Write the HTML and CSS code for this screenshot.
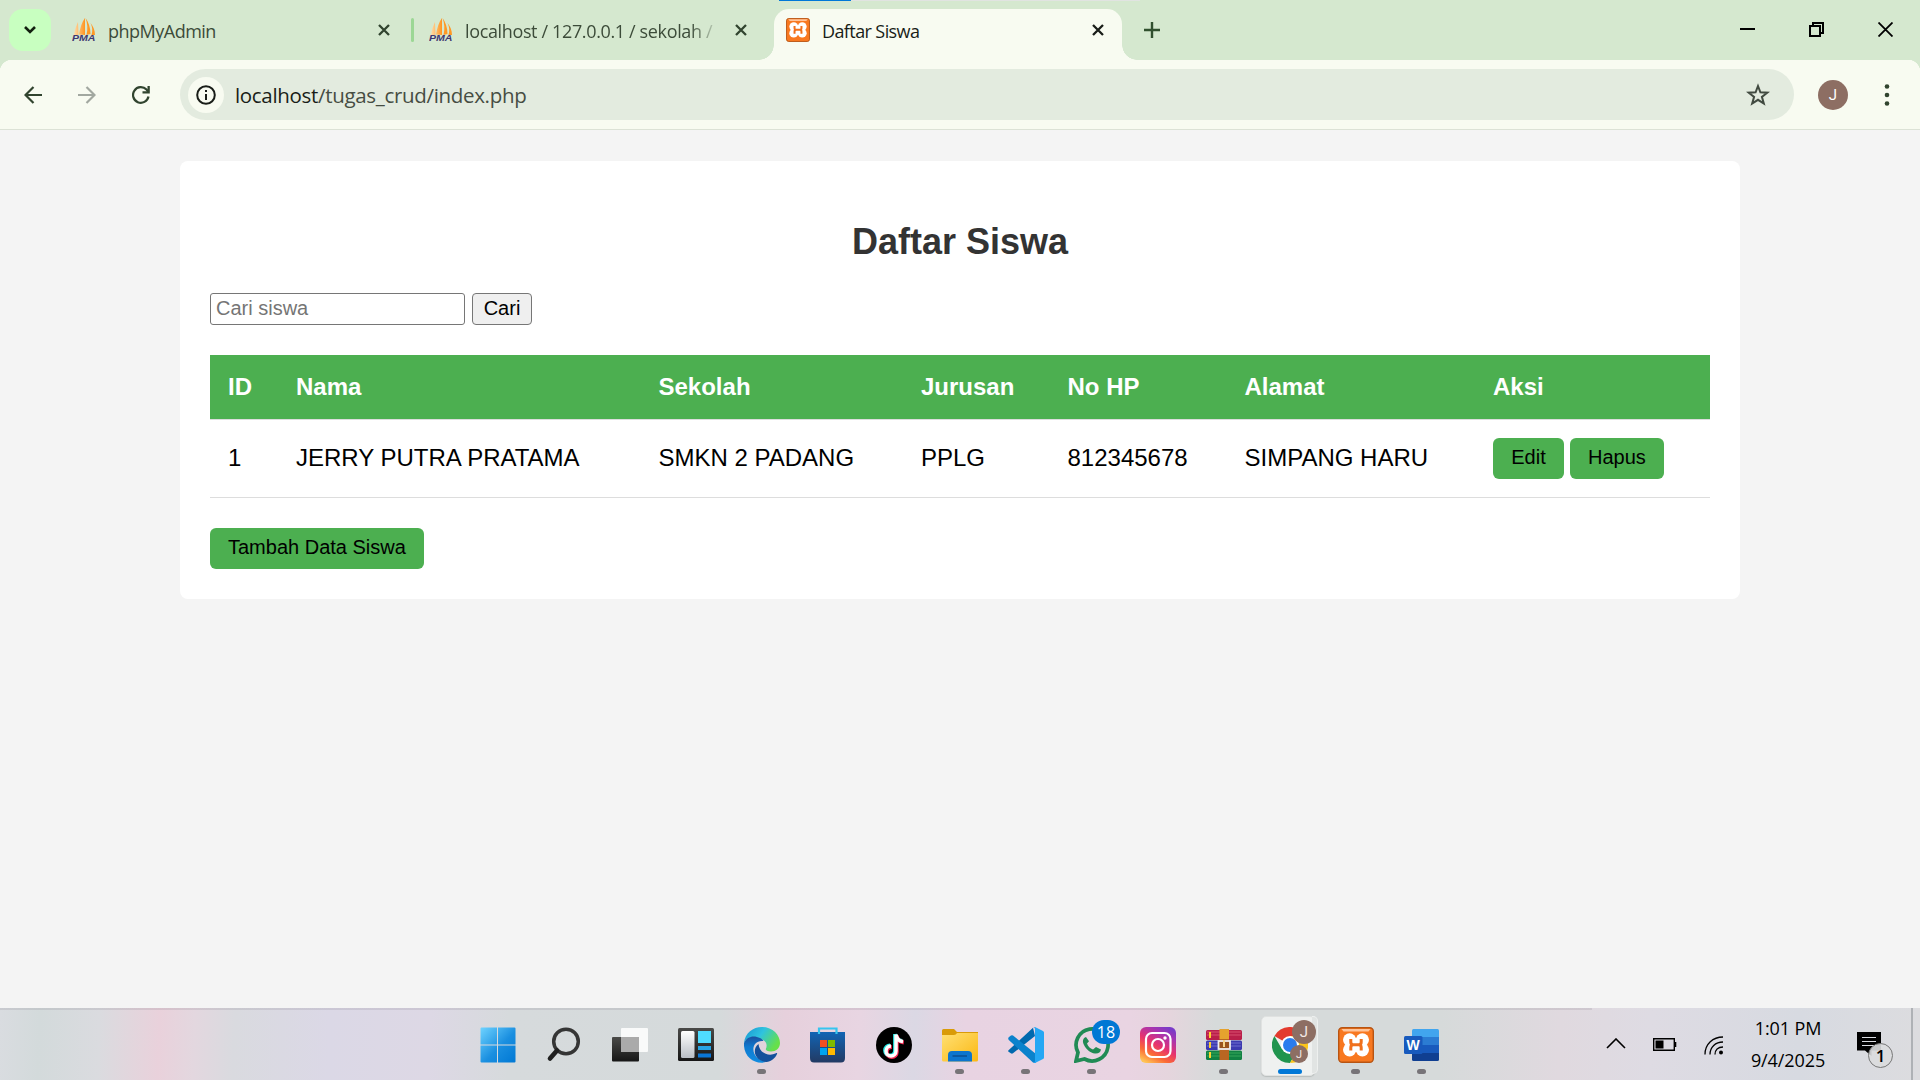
FILE: index.html
```html
<!DOCTYPE html>
<html lang="id">
<head>
<meta charset="utf-8">
<title>Daftar Siswa</title>
<link rel="stylesheet" href="styles.css">
</head>
<body>
<svg class="defs" width="0" height="0">
  <defs>
    <linearGradient id="sail" x1="0" y1="0" x2="1" y2="0"><stop offset="0" stop-color="#ffdba8"/><stop offset="1" stop-color="#ff9420"/></linearGradient>
    <linearGradient id="win" x1="0" y1="0" x2="1" y2="1"><stop offset="0" stop-color="#6fd3ff"/><stop offset=".55" stop-color="#1a8fe0"/><stop offset="1" stop-color="#0078d4"/></linearGradient>
    <linearGradient id="dark" x1="0" y1="0" x2="0" y2="1"><stop offset="0" stop-color="#4a4a48"/><stop offset="1" stop-color="#161616"/></linearGradient>
    <linearGradient id="panel" x1="0" y1="0" x2="0" y2="1"><stop offset="0" stop-color="#fff"/><stop offset="1" stop-color="#b9bec5"/></linearGradient>
    <linearGradient id="edgeTop" x1="0" y1="0" x2="1" y2=".5"><stop offset="0" stop-color="#1793d3"/><stop offset=".5" stop-color="#2fc3df"/><stop offset="1" stop-color="#66e04a"/></linearGradient>
    <linearGradient id="edgeLeft" x1="0" y1="0" x2="0" y2="1"><stop offset="0" stop-color="#1b4f9e"/><stop offset=".4" stop-color="#0f7ad0"/><stop offset="1" stop-color="#118ce0"/></linearGradient>
    <linearGradient id="store" x1="0" y1="0" x2="0" y2="1"><stop offset="0" stop-color="#1164b4"/><stop offset="1" stop-color="#233a63"/></linearGradient>
    <linearGradient id="folder" x1="0" y1="0" x2="1" y2="1"><stop offset="0" stop-color="#ffe074"/><stop offset="1" stop-color="#fbb813"/></linearGradient>
    <linearGradient id="ig" x1=".2" y1="1" x2=".75" y2="0"><stop offset="0" stop-color="#ffc455"/><stop offset=".25" stop-color="#fb6a35"/><stop offset=".5" stop-color="#e8336d"/><stop offset=".8" stop-color="#a835b0"/><stop offset="1" stop-color="#7a3bc8"/></linearGradient>
    <symbol id="pma" viewBox="0 0 24 24">
      <path d="M6 4C4 8 2.500 13 2 17h4.500zM13 0c-3 4-5 10-6 16.500l6 .5z" fill="url(#sail)"/>
      <path d="M13.500 0c2 5 2.500 11 1 17l4-1C18.500 10 16.500 4 13.500 0zM18.500 5c2 4 2.300 8 1 12H23c0-5-2-9-4.500-12z" fill="#ff9824"/>
      <text x="0" y="23.200" textLength="23.500" lengthAdjust="spacingAndGlyphs" class="pma-text">PMA</text>
    </symbol>
    <symbol id="xampp" viewBox="0 0 36 36">
      <rect x=".7" y=".7" width="34.600" height="34.600" rx="3.500" fill="#f87820" stroke="#b85412" stroke-width="1.400"/>
      <path d="M3.500 2h29l-2 2.500h-25z" fill="#ffc49a"/>
      <g fill="#fff"><circle cx="11.600" cy="12.800" r="6.600"/><circle cx="24.400" cy="12.800" r="6.600"/><circle cx="11.600" cy="22.800" r="6.600"/><circle cx="24.400" cy="22.800" r="6.600"/><path d="M11 11h14v14H11z"/></g>
      <path d="M12.800 12v3q0 2.800 2.500 2.800h5.400q2.500 0 2.500-2.800v-3M12.800 23.600v-3q0-2.800 2.500-2.800M23.200 23.600v-3q0-2.800-2.500-2.800" fill="none" stroke="#f0701c" stroke-width="3"/>
    </symbol>
    <symbol id="close" viewBox="0 0 14 14"><path d="M2 2l10 10M12 2L2 12" fill="none" stroke="currentColor" stroke-width="2.300"/></symbol>
  </defs>
</svg>

<header class="tabstrip">
  <button class="tab-search" aria-label="Cari tab"><svg width="14" height="10" viewBox="0 0 14 10"><path d="M2 2l5 5 5-5" fill="none" stroke="#12200f" stroke-width="2.600"/></svg></button>
  <div class="tab tab-first">
    <svg class="favicon"><use href="#pma"/></svg><span class="tab-title t1">phpMyAdmin</span><svg class="tab-close"><use href="#close"/></svg>
  </div>
  <i class="tab-divider"></i>
  <div class="tab tab-second">
    <svg class="favicon"><use href="#pma"/></svg><span class="tab-title t2">localhost / 127.0.0.1 / sekolah /</span><svg class="tab-close"><use href="#close"/></svg>
  </div>
  <div class="tab tab-active">
    <svg class="favicon"><use href="#xampp"/></svg><span class="tab-title t3">Daftar Siswa</span><svg class="tab-close"><use href="#close"/></svg>
  </div>
  <button class="new-tab" aria-label="Tab baru"><svg width="16" height="16" viewBox="0 0 16 16"><path d="M8 0v16M0 8h16" stroke="#31502f" stroke-width="2.400"/></svg></button>
  <div class="window-controls">
    <svg width="15" height="15"><path d="M0 7h15" stroke="#000" stroke-width="2"/></svg>
    <svg width="15" height="15"><path d="M1 4h10v10H1zM4 4V1h10v10h-3" fill="none" stroke="#000" stroke-width="2"/></svg>
    <svg width="15" height="15"><path d="M.5.5l14 14M14.500.5l-14 14" stroke="#000" stroke-width="1.800"/></svg>
  </div>
  <i class="load-bar"></i>
</header>

<nav class="toolbar">
  <svg class="nav-icon back" viewBox="0 0 18 18"><path d="M18 9H2M9.500 1L1.500 9l8 8" fill="none" stroke="#31442f" stroke-width="2.200"/></svg>
  <svg class="nav-icon forward" viewBox="0 0 18 18"><path d="M0 9h16M8.500 1l8 8-8 8" fill="none" stroke="#a2a8a0" stroke-width="2.200"/></svg>
  <svg class="nav-icon reload" viewBox="0 0 18 18"><path d="M16.500 10.500A7.800 7.800 0 1 1 14.500 3.600L16.500 6" fill="none" stroke="#31442f" stroke-width="2.200"/><path d="M17.800 0v7.500h-7.300V5.300h5V0z" fill="#31442f"/></svg>
  <div class="omnibox">
    <span class="site-info"><svg width="20" height="20" viewBox="0 0 20 20"><circle cx="10" cy="10" r="8.800" fill="none" stroke="#191d18" stroke-width="2"/><path d="M10 9v6M10 5v2" stroke="#191d18" stroke-width="2"/></svg></span>
    <span class="url"><b>localhost</b>/tugas_crud/index.php</span>
    <svg class="star" width="24" height="24" viewBox="0 0 24 24"><path d="M12 3l2.400 6.300 6.900.4-5.400 4.200 1.900 6.600-5.800-3.700-5.800 3.700 1.900-6.600-5.400-4.200 6.900-.4z" fill="none" stroke="#414a40" stroke-width="2"/></svg>
  </div>
  <span class="avatar">J</span>
  <svg class="menu" width="6" height="22"><circle cx="3" cy="2.500" r="2.300"/><circle cx="3" cy="11" r="2.300"/><circle cx="3" cy="19.500" r="2.300"/></svg>
</nav>

<main class="page">
  <section class="container">
    <h2>Daftar Siswa</h2>
    <form class="search">
      <input type="text" placeholder="Cari siswa">
      <button type="button">Cari</button>
    </form>
    <table>
      <colgroup><col class="c-id"><col class="c-nama"><col class="c-sekolah"><col class="c-jurusan"><col class="c-hp"><col class="c-alamat"><col></colgroup>
      <tr><th>ID</th><th>Nama</th><th>Sekolah</th><th>Jurusan</th><th>No HP</th><th>Alamat</th><th>Aksi</th></tr>
      <tr><td>1</td><td>JERRY PUTRA PRATAMA</td><td>SMKN 2 PADANG</td><td>PPLG</td><td>812345678</td><td>SIMPANG HARU</td><td class="aksi"><div class="actions"><button class="btn edit">Edit</button><button class="btn">Hapus</button></div></td></tr>
    </table>
    <button class="btn add">Tambah Data Siswa</button>
  </section>
</main>

<footer class="taskbar">
  <div class="apps">
    <span class="app"><svg viewBox="0 0 36 36"><path d="M1.500.5H17v17H.5v-16q0-1 1-1zM18 .5h16.500q1 0 1 1v16H18zM.5 18.500H17v17H1.500q-1 0-1-1zM18 18.500h17.500v16q0 1-1 1H18z" fill="url(#win)"/></svg></span>
    <span class="app"><svg viewBox="0 0 36 36"><circle cx="20" cy="14.500" r="12.300" fill="none" stroke="#353535" stroke-width="3.500"/><path d="M11 23.500l-7 8" stroke="#202020" stroke-width="4.600" stroke-linecap="round"/></svg></span>
    <span class="app"><svg viewBox="0 0 36 36"><rect y="10" width="27" height="24.500" rx="1" fill="url(#dark)"/><rect x="9" y="1" width="27" height="24" rx="1" fill="#fff" opacity=".86"/><path d="M9 10h18v15H9z" fill="#aaa"/></svg></span>
    <span class="app"><svg viewBox="0 0 36 36"><rect y="1" width="36" height="33" rx="1.500" fill="url(#dark)"/><rect x="3" y="4" width="13.500" height="27" rx="1.500" fill="url(#panel)"/><path d="M20 4h13v12H20z" fill="#4fdcff"/><path d="M20 19h13v4H20z" fill="#27a4e4"/><path d="M20 26.500h13v4H20z" fill="#0a76d6"/></svg></span>
    <span class="app running"><svg viewBox="0 0 36 36"><path d="M0 16C1 6 9 0 18 0c11 0 18 8 18 16 0 5-4 8.500-9 8.500-4 0-6-1.500-5-3 1-2 1.500-7-4-9C10 9 3 10 0 16z" fill="url(#edgeTop)"/><path d="M0 16C3 9 10 8 16 11c2 1 3 2 3.500 3-9-1-12 7-9 13 2.500 5 8 8 13 7.500C13 39-1 31 0 16z" fill="url(#edgeLeft)"/><path d="M14.500 17c-7 5-4 17 8 18 4 0 9-4 10.500-8 .4-1-.2-1.300-1-.7-8 4-17-1-17.500-9.300z" fill="#13509b"/></svg></span>
    <span class="app"><svg viewBox="0 0 36 36"><path d="M9 8V1.500h17.500V8" fill="none" stroke="#36c5ef" stroke-width="2.200"/><path d="M0 5h35v26q0 4.500-4 4.500H4Q0 35.500 0 31z" fill="url(#store)"/><path d="M9 5v2M26.500 5v2" stroke="#36c5ef" stroke-width="2.200"/><path d="M10 13h7v7h-7z" fill="#f25022"/><path d="M18 13h7v7h-7z" fill="#7fba00"/><path d="M10 21h7v7h-7z" fill="#00a4ef"/><path d="M18 21h7v7h-7z" fill="#ffb900"/></svg></span>
    <span class="app"><svg viewBox="0 0 36 36"><circle cx="18" cy="18" r="18"/><path d="M19 7v16.500a5 5 0 1 1-5-5M19 7c.5 4 3 6.500 7 7" fill="none" stroke="#25e8e4" stroke-width="3.800"/><path d="M20.800 8.500V25a5 5 0 1 1-5-5M20.800 8.500c.5 4 3 6.500 7 7" fill="none" stroke="#fb2d57" stroke-width="3.800"/><path d="M20 7.500V24a5 5 0 1 1-5-5M20 7.500c.5 4 3 6.500 7 7" fill="none" stroke="#fff" stroke-width="3.500"/></svg></span>
    <span class="app running"><svg viewBox="0 0 36 36"><path d="M0 3.500Q0 2 1.500 2H12l3 3h21v8H0z" fill="#d99b08"/><path d="M0 8h12q2 0 3-2h21v27q0 1.500-1.500 1.500h-33Q0 34.500 0 33z" fill="url(#folder)"/><path d="M6 34.500V28q0-4 4-4h16q4 0 4 4v6.500z" fill="#0d75cd"/><path d="M10.500 29h14.500" stroke="#0b4f91" stroke-width="1.500"/></svg></span>
    <span class="app running"><svg viewBox="0 0 36 36"><path d="M.8 23L25 .8 27 9 5 26.300q-1 .8-2.200 0L.6 24.800q-1-.8.2-1.800z" fill="#0069ae"/><path d="M1 10l2-1.500q1-.7 2 0L28 27v8.500q-1.500.8-3 0L.8 13q-1.300-1.500.2-3z" fill="#0b82cc"/><path d="M25 .5q1-1 2.500-.3L35 4q1 .5 1 1.500v25q0 1-1 1.500l-7.500 3.800q-1.500.5-2.500-.5 2 1 2-1.500v-31.500q0-2.500-2-1.800z" fill="#25a7f4"/></svg></span>
    <span class="app running"><svg viewBox="0 0 36 36"><path d="M2 34l2-8.500A16 16 0 1 1 10.500 32z" fill="none" stroke="#218b55" stroke-width="3.700"/><path d="M12 10c-3 1-4 4-2 8 2.500 4.500 6 8 11 8.500 3.500.3 5.500-1 6-4l-5-2.500-3 2.500c-3-1-5-3.300-6-6l2-2.300z" fill="#218b55"/></svg><b class="count">18</b></span>
    <span class="app"><svg viewBox="0 0 36 36"><rect width="36" height="36" rx="6" fill="url(#ig)"/><rect x="6" y="6" width="24.500" height="24" rx="6" fill="none" stroke="#fff" stroke-width="2.200"/><circle cx="18" cy="18" r="6" fill="none" stroke="#fff" stroke-width="2.200"/><circle cx="25" cy="11" r="1.700" fill="#fff"/></svg></span>
    <span class="app running"><svg viewBox="0 0 36 36"><rect y="3" width="36" height="10" rx="1.500" fill="#b91f4a"/><path d="M1 5h34M1 8h34" stroke="#d8506f"/><rect y="13.500" width="36" height="9.500" rx="1.500" fill="#3c3ab0"/><path d="M1 16h34M1 19h34" stroke="#6f6dce"/><rect y="23.500" width="36" height="9.500" rx="1.500" fill="#118243"/><path d="M1 26h34M1 29h34" stroke="#38a75a"/><path d="M3 5h2v6H3zM3 15h2v6H3zM3 25h2v6H3z" fill="#ffd22d"/><path d="M13.500 2h9.500v10h-9.500z" fill="#e5a22e"/><path d="M13.500 12h9.500v21h-9.500z" fill="#b96622"/><rect x="12.500" y="14" width="11.500" height="8" fill="#9a541b" stroke="#eee" stroke-width="1.800"/><path d="M18 13v7" stroke="#f5d48b" stroke-width="2"/></svg></span>
    <span class="app running current"><i class="stack"></i><svg viewBox="0 0 36 36"><path d="M18 18L2.400 9A18 18 0 0 1 33.600 9H18z" fill="#e33b2e"/><path d="M18 18l7.800 4.500L18 36A18 18 0 0 1 2.400 9L10.200 22.500z" fill="#20944e"/><path d="M18 9h15.600A18 18 0 0 1 18 36l7.800-13.500z" fill="#fcc519"/><circle cx="18" cy="18" r="9" fill="#fff"/><circle cx="18" cy="18" r="7" fill="#2b7cee"/></svg><b class="profile big">J</b><b class="profile small">J</b></span>
    <span class="app running"><svg><use href="#xampp"/></svg></span>
    <span class="app running"><svg viewBox="0 0 36 36"><path d="M8 3.500Q8 2 9.500 2h24Q35 2 35 3.500V10H8z" fill="#41a5ee"/><path d="M8 10h27v8H8z" fill="#2b7cd3"/><path d="M8 18h27v8H8z" fill="#185abd"/><path d="M8 26h27v6.500q0 1.500-1.500 1.500h-24Q8 34 8 32.500z" fill="#103f91"/><rect y="9" width="18.500" height="18" rx="1.500" fill="#185abd"/><text x="9.200" y="22.800" class="word-text">W</text></svg></span>
  </div>
  <div class="tray">
    <svg width="20" height="11"><path d="M1 10l9-9 9 9" fill="none" stroke="#000" stroke-width="1.600"/></svg>
    <svg width="24" height="13"><path d="M.7.7h20.600v11.600H.7z" fill="none" stroke="#000" stroke-width="1.400"/><path d="M2.500 2.500h8v8h-8zM22 4h1.300v5H22z"/></svg>
    <svg width="20" height="19"><g fill="none" stroke="#000" stroke-width="1.300"><path d="M1 18.500C1 8 9 1 19 1"/><path d="M6 18.500C6 11 11.500 6 19 6" /><path d="M11 18.500c0-4.500 3-7.500 8-7.500"/></g><circle cx="17" cy="16.500" r="2"/></svg>
    <div class="clock"><span>1:01 PM</span><span>9/4/2025</span></div>
    <span class="notice"><svg width="24" height="25"><path d="M0 0h24v18.500h-9.500V24L8 18.500H0z"/><path d="M5 5.500h14M5 9.500h14M5 13.500h14" stroke="#d9dbe1" stroke-width="1.200"/></svg><b>1</b></span>
    <i class="desktop-edge"></i>
  </div>
</footer>
</body>
</html>
```
FILE: styles.css
```css
* { box-sizing: border-box; }
body {
  margin: 0;
  width: 1920px;
  height: 1080px;
  overflow: hidden;
  display: flex;
  flex-direction: column;
  background: #f4f4f4;
  font-family: "Liberation Sans", Arial, sans-serif;
}
button { font-family: inherit; }
svg { display: block; flex: none; }
.defs { position: absolute; }

/* tab strip */
.tabstrip {
  position: relative;
  display: flex;
  height: 60px;
  flex: none;
  background: #d5e8cf;
  font-family: "Open Sans", "Noto Sans", sans-serif;
}
.tab-search {
  display: grid;
  place-items: center;
  width: 42px;
  height: 42px;
  margin: 9px 0 0 9px;
  padding: 0;
  border: 0;
  border-radius: 14px;
  background: #c8ffc0;
}
.tab {
  display: flex;
  align-items: center;
  height: 51px;
  margin-top: 9px;
  padding: 0 0 9px;
  color: #3c4b39;
}
.tab-first { width: 340px; margin-left: 21px; }
.tab-second { width: 321px; margin-left: 15px; }
.tab-active {
  position: relative;
  width: 348px;
  margin-left: 24px;
  padding-left: 12px;
  border-radius: 15px 15px 0 0;
  background: #f8fbf1;
  color: #191d18;
}
.tab-active::before, .tab-active::after {
  content: "";
  position: absolute;
  bottom: 0;
  width: 15px;
  height: 15px;
}
.tab-active::before { left: -15px; background: radial-gradient(circle at 0 0, transparent 14.5px, #f8fbf1 15px); }
.tab-active::after { right: -15px; background: radial-gradient(circle at 100% 0, transparent 14.5px, #f8fbf1 15px); }
.favicon { width: 24px; height: 24px; }
.pma-text { font: italic bold 9px "Liberation Sans", sans-serif; fill: #403770; }
.tab-title { flex: none; width: 269px; margin: 1px 0 0 12px; font-size: 18px; line-height: 24px; white-space: nowrap; }
.t1 { letter-spacing: -.5px; }
.t2 { letter-spacing: -.36px; -webkit-mask-image: linear-gradient(90deg, #000 225px, transparent 255px); mask-image: linear-gradient(90deg, #000 225px, transparent 255px); }
.t3 { letter-spacing: -.6px; }
.tab-close { width: 14px; height: 14px; color: #31442f; }
.tab-active .tab-close { color: #191d18; }
.tab-divider { width: 3px; height: 24px; margin: 18px 0 0 -1px; border-radius: 2px; background: #9cd795; }
.new-tab { width: 16px; height: 16px; margin: 22px 0 0 22px; padding: 0; border: 0; background: none; }
.window-controls { display: flex; gap: 54px; margin: 22px 27px 0 auto; }
.load-bar { position: absolute; left: 779px; top: 0; width: 361px; height: 1px; background: linear-gradient(90deg, #0078d7 72px, #e1e4e1 72px); }

/* toolbar */
.toolbar {
  display: flex;
  align-items: center;
  height: 70px;
  flex: none;
  padding: 0 30px 0 24px;
  border-bottom: 1px solid #dce2d6;
  background:
    radial-gradient(circle at 12px 12px, #f8fbf1 12px, #d5e8cf 12.5px) 0 0 / 12px 12px no-repeat,
    radial-gradient(circle at 0 12px, #f8fbf1 12px, #d5e8cf 12.5px) 100% 0 / 12px 12px no-repeat,
    #f8fbf1;
  font-family: "Open Sans", "Noto Sans", sans-serif;
}
.nav-icon { width: 18px; height: 18px; margin-right: 36px; }
.nav-icon.reload { margin-right: 30px; }
.omnibox {
  display: flex;
  align-items: center;
  width: 1614px;
  height: 51px;
  padding: 0 24px 0 8px;
  border-radius: 26px;
  background: #e3ebdf;
}
.site-info { display: grid; place-items: center; width: 36px; height: 36px; border-radius: 50%; background: #f8fbf1; }
.url { margin-left: 11px; font-size: 20.5px; letter-spacing: -.32px; color: #464d43; }
.url b { font-weight: 400; color: #191d18; }
.star { margin-left: auto; }
.avatar { display: grid; place-items: center; width: 30px; height: 30px; margin-left: 24px; border-radius: 50%; background: #8d6e63; color: #fff; font: 15px Roboto, sans-serif; }
.menu { margin-left: auto; fill: #31442f; }

/* page */
.page { flex: 1; padding: 31px 180px 0; }
.container { height: 438px; padding: 60px 30px 30px; border-radius: 8px; background: #fff; }
h2 { margin: 0; color: #333; font-size: 36px; line-height: 41px; text-align: center; }
.search { display: flex; gap: 7px; margin-top: 31px; }
.search input { width: 255px; height: 32px; padding: 0 5px 2px; border: 1.5px solid #767676; border-radius: 3px; font: 20px "Liberation Sans", Arial, sans-serif; }
.search input::placeholder { color: #757575; opacity: 1; }
.search button { width: 60px; height: 32px; padding: 0 0 2px; border: 1.5px solid #767676; border-radius: 4px; background: #efefef; color: #000; font-size: 20px; line-height: 28px; }
table { width: 1500px; margin-top: 30px; border-collapse: separate; border-spacing: 0; table-layout: fixed; font-size: 24px; }
.c-id { width: 68px; }
.c-nama { width: 362.5px; }
.c-sekolah { width: 262.5px; }
.c-jurusan { width: 146.5px; }
.c-hp { width: 177px; }
.c-alamat { width: 248.5px; }
th, td { padding: 0 18px; border-bottom: 1px solid #ddd; text-align: left; white-space: nowrap; }
th { height: 65px; background: #4caf50; background-clip: padding-box; color: #fff; }
td { height: 78px; padding-bottom: 2px; color: #000; }
td.aksi { padding-bottom: 0; }
.actions { display: flex; gap: 6px; }
.btn { height: 41px; padding: 0 18px 2px; border: 0; border-radius: 6px; background: #4caf50; color: #000; font-size: 20px; line-height: 39px; }
.edit { width: 71px; }
.add { display: block; margin-top: 30px; }

/* taskbar */
.taskbar {
  display: flex;
  justify-content: space-between;
  height: 72px;
  flex: none;
  padding-left: 465px;
  background:
    linear-gradient(rgba(90, 80, 95, .13), rgba(90, 80, 95, .13)) 0 0 / 1592px 2px no-repeat,
    linear-gradient(92deg, #d9dce0 0, #d3dadb 40px, #dadbdf 100px, #e9d1db 160px, #e3d7df 195px, #d9dadf 235px, #dbd8e6 330px, #ddd8e5 430px, #d6dadc 510px, #d5dadb 720px, #e6d0dc 785px, #e8d5e2 860px, #dbd8e4 915px, #e8d3e2 965px, #e9d4e2 1130px, #e5d5dd 1170px, #d6dada 1215px, #d6dada 1440px, #e0d9df 1560px, #dedbe3 1650px, #d7dae1 1800px, #dcdcdf 1920px);
}
.apps { display: flex; }
.app { position: relative; display: flex; justify-content: center; width: 66px; padding-top: 19px; }
.app > svg { position: relative; width: 36px; height: 36px; }
.app.running::after { content: ""; position: absolute; top: 61px; left: 28px; width: 9px; height: 5px; border-radius: 3px; background: #777478; }
.app.current::before { content: ""; position: absolute; left: 4px; top: 8px; width: 52px; height: 58px; border: 1px solid #e0e2e1; border-radius: 5px; background: #eff1f0; box-shadow: 0 1px 1px #b9bebd; }
.stack { position: absolute; left: 55px; top: 8px; width: 6px; height: 58px; border-radius: 0 5px 5px 0; border: 1px solid #eef0ef; border-left: 0; background: #e1e4e3; }
.app.current::after { left: 21px; width: 24px; background: #0078d7; }
.count { position: absolute; left: 33px; top: 12px; width: 28px; height: 24px; border-radius: 12px; background: #0078d4; color: #fff; font: 16px/24px "Open Sans", sans-serif; text-align: center; }
.profile { position: absolute; display: grid; place-items: center; border-radius: 50%; background: #8d6e63; color: #f3e8e5; font-family: Roboto, sans-serif; font-weight: 400; }
.big { left: 35px; top: 12px; width: 24px; height: 24px; font-size: 15px; }
.small { left: 33px; top: 37px; width: 18px; height: 18px; font-size: 11px; }
.word-text { font: bold 14px "Liberation Sans", sans-serif; fill: #fff; text-anchor: middle; }
.tray { display: flex; align-items: center; width: 314px; font-family: "Open Sans", "Noto Sans", sans-serif; }
.tray > svg:nth-child(1) { margin-bottom: 2px; }
.tray > svg:nth-child(2) { margin: 0 0 0 27px; }
.tray > svg:nth-child(3) { margin: 2px 0 0 27px; }
.clock { display: flex; flex-direction: column; gap: 8px; width: 90px; margin: 0 0 0 19px; text-align: center; font-size: 18px; line-height: 24px; white-space: nowrap; letter-spacing: -.1px; }
.notice { position: relative; width: 24px; height: 25px; margin: 0 0 0 24px; }
.notice b { position: absolute; left: 11px; top: 11px; width: 25px; height: 25px; border: 1px solid #777; border-radius: 50%; background: rgba(218, 220, 222, .9); font: 600 17px/23px "Open Sans", sans-serif; text-align: center; }
.desktop-edge { width: 2px; height: 72px; margin-left: auto; margin-right: 7px; background: #aeb1b5; }
```
